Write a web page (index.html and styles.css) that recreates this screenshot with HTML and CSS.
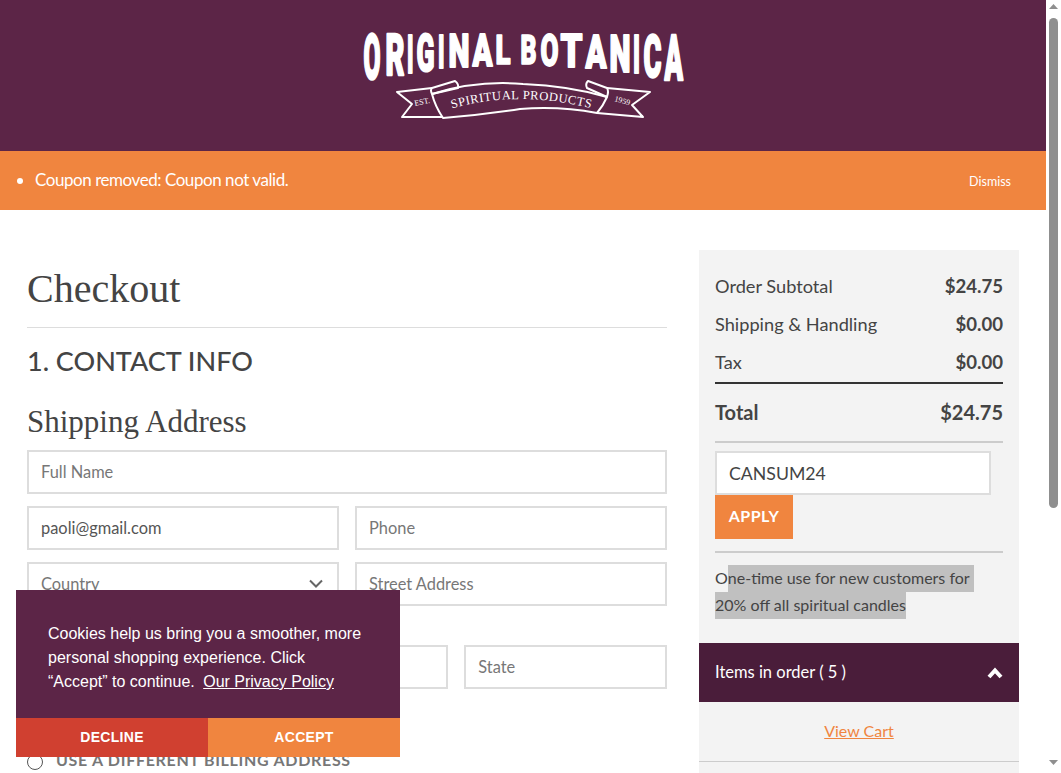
FILE: index.html
```html
<!DOCTYPE html>
<html lang="en">
<head>
<meta charset="utf-8">
<title>Checkout - Original Botanica</title>
<link rel="stylesheet" href="styles.css">
</head>
<body>
<div class="page">
  <div class="content">
    <header class="site-header">
      <svg class="logo" viewBox="360 30 326 97" width="326" height="97" role="img" aria-label="Original Botanica Spiritual Products">
        <g class="logo-word">
          <text transform="translate(363.5 78.5) scale(1 2.50)" textLength="17" lengthAdjust="spacingAndGlyphs">O</text>
          <text transform="translate(385.5 74.5) scale(1 2.28)" textLength="19" lengthAdjust="spacingAndGlyphs">R</text>
          <text transform="translate(407 72.5) scale(1 2.16)" textLength="6.5" lengthAdjust="spacingAndGlyphs">I</text>
          <text transform="translate(416.5 70.5) scale(1 2.05)" textLength="18" lengthAdjust="spacingAndGlyphs">G</text>
          <text transform="translate(438 67.5) scale(1 1.88)" textLength="6.5" lengthAdjust="spacingAndGlyphs">I</text>
          <text transform="translate(448.5 66.5) scale(1 1.82)" textLength="21" lengthAdjust="spacingAndGlyphs">N</text>
          <text transform="translate(472.5 65.5) scale(1 1.77)" textLength="20" lengthAdjust="spacingAndGlyphs">A</text>
          <text transform="translate(495.5 63.5) scale(1 1.66)" textLength="15" lengthAdjust="spacingAndGlyphs">L</text>
          <text transform="translate(520.5 63.5) scale(1 1.66)" textLength="16" lengthAdjust="spacingAndGlyphs">B</text>
          <text transform="translate(540.5 65.5) scale(1 1.77)" textLength="18" lengthAdjust="spacingAndGlyphs">O</text>
          <text transform="translate(560.5 66.5) scale(1 1.82)" textLength="22" lengthAdjust="spacingAndGlyphs">T</text>
          <text transform="translate(585.5 67.5) scale(1 1.88)" textLength="21" lengthAdjust="spacingAndGlyphs">A</text>
          <text transform="translate(609.5 71.5) scale(1 2.10)" textLength="21" lengthAdjust="spacingAndGlyphs">N</text>
          <text transform="translate(633 72.5) scale(1 2.16)" textLength="7" lengthAdjust="spacingAndGlyphs">I</text>
          <text transform="translate(643.5 76.5) scale(1 2.39)" textLength="18" lengthAdjust="spacingAndGlyphs">C</text>
          <text transform="translate(664.5 79.5) scale(1 2.55)" textLength="18.5" lengthAdjust="spacingAndGlyphs">A</text>
        </g>
        <g class="ribbon">
          <path d="M432 94 Q477 80 523 84 Q570 86 607 97 Q603 106 597 113 Q560 106 520 109 Q480 115 443 118 Q435 106 432 94Z"/>
          <path d="M432 94 Q430 90 432 88 L455 81 Q459 84 458 88 L432 94"/>
          <path d="M432 88 L397 92 L412 104 L402 117 L442 117"/>
          <path d="M607 97 Q609 91 607 88 L588 81 Q585 84 587 88 L607 97"/>
          <path d="M607 88 L650 92 L632 105 L643 117 L597 113"/>
        </g>
        <path id="ribbon-arc" class="arc" d="M452 108.5 Q521 88 606 112"/>
        <text class="ribbon-text"><textPath href="#ribbon-arc">SPIRITUAL PRODUCTS</textPath></text>
        <text class="ribbon-small" transform="translate(415 106) rotate(-12)">EST.</text>
        <text class="ribbon-small" transform="translate(614 101) rotate(16)">1959</text>
      </svg>
    </header>

    <div class="notice">
      <ul class="notice-list"><li>Coupon removed: Coupon not valid.</li></ul>
      <a class="dismiss" href="#">Dismiss</a>
    </div>

    <main class="checkout">
      <section class="form-col">
        <h1 class="title">Checkout</h1>
        <h2 class="step">1. CONTACT INFO</h2>
        <h3 class="subtitle">Shipping Address</h3>
        <div class="row"><input class="field" placeholder="Full Name"></div>
        <div class="row">
          <input class="field" value="paoli@gmail.com">
          <input class="field" placeholder="Phone">
        </div>
        <div class="row">
          <div class="field select">
            <span>Country</span>
            <svg class="chevron" viewBox="0 0 14 9" width="14" height="9"><path d="M1 1.5 7 7.5 13 1.5"/></svg>
          </div>
          <input class="field" placeholder="Street Address">
        </div>
        <div class="row row-spaced">
          <input class="field" placeholder="City">
          <input class="field" placeholder="Zip">
          <input class="field" placeholder="State">
        </div>
        <label class="radio-row"><span class="radio"></span><span>USE A DIFFERENT BILLING ADDRESS</span></label>
      </section>

      <aside class="summary">
        <div class="summary-body">
          <div class="line"><span>Order Subtotal</span><b>$24.75</b></div>
          <div class="line"><span>Shipping &amp; Handling</span><b>$0.00</b></div>
          <div class="line"><span>Tax</span><b>$0.00</b></div>
          <div class="total"><span>Total</span><b>$24.75</b></div>
          <input class="coupon" value="CANSUM24">
          <button class="apply">APPLY</button>
          <p class="promo">O<mark class="sel sel-first">ne-time use for new customers for</mark><br><mark class="sel">20% off all spiritual candles</mark></p>
        </div>
        <div class="items-head">
          <span>Items in order ( 5 )</span>
          <svg viewBox="0 0 16 12" width="16" height="12"><path d="M2 10 8 3.5 14 10"/></svg>
        </div>
        <div class="view-cart"><a href="#">View Cart</a></div>
      </aside>
    </main>
  </div>

  <div class="scrollbar" aria-hidden="true">
    <svg viewBox="0 0 9 5" width="9" height="5"><path d="M0 5 4.5 0 9 5Z"/></svg>
    <div class="thumb"></div>
    <svg class="arrow-down" viewBox="0 0 9 5" width="9" height="5"><path d="M0 0 4.5 5 9 0Z"/></svg>
  </div>

  <div class="cookie">
    <p class="cookie-text">Cookies help us bring you a smoother, more personal shopping experience. Click “Accept” to continue. <a href="#">Our Privacy Policy</a></p>
    <div class="cookie-actions">
      <button class="cookie-btn decline">DECLINE</button>
      <button class="cookie-btn accept">ACCEPT</button>
    </div>
  </div>
</div>
</body>
</html>
```

FILE: styles.css
```css
* { box-sizing: border-box; }
html, body { margin: 0; height: 773px; overflow: hidden; background: #fff; }
body { font-family: Lato, "Open Sans", sans-serif; color: #444; }

.page { display: flex; height: 773px; position: relative; overflow: hidden; }
.content { width: 1046px; display: flex; flex-direction: column; }

/* scrollbar */
.scrollbar { width: 15px; display: flex; flex-direction: column; align-items: center; padding-top: 4px; background: #fff; }
.scrollbar svg { fill: #8f8f8f; flex: none; }
.thumb { width: 9px; height: 490px; margin-top: 9px; background: #8f8f8f; border-radius: 5px; }
.arrow-down { margin-top: auto; margin-bottom: 8px; }

/* header */
.site-header { height: 151px; flex: none; background: #5c2547; display: flex; justify-content: center; padding-top: 30px; }
.logo { display: block; }
.logo-word text { font-family: Roboto, sans-serif; font-weight: 900; font-size: 25px; fill: #fff; stroke: #fff; stroke-width: 1; stroke-linejoin: round; }
.ribbon path { fill: none; stroke: #fff; stroke-width: 2; stroke-linejoin: round; }
.arc { fill: none; }
.ribbon-text { font-family: "Liberation Serif", serif; font-size: 12.5px; letter-spacing: .5px; fill: #fff; }
.ribbon-small { font-family: "Liberation Serif", serif; font-size: 8px; fill: #fff; }

/* notice */
.notice { height: 59px; flex: none; background: #f0853f; color: #fff; display: flex; align-items: center; justify-content: space-between; padding: 0 35px 2px; }
.notice-list { margin: 0; padding: 0; font-size: 17px; letter-spacing: -.45px; list-style: disc; }
.dismiss { color: #fff; font-size: 12.5px; text-decoration: none; padding-top: 4px; }

/* layout */
.checkout { flex: 1; display: grid; grid-template-columns: 640px 320px; column-gap: 32px; padding: 40px 27px 0; min-height: 0; }
.form-col { min-width: 0; }

.title { margin: 16px 0 0; padding-bottom: 15px; border-bottom: 1px solid #ddd; font: 400 40px/46px "Liberation Serif", serif; color: #444; }
.step { margin: 16px 0 0; font-size: 27px; line-height: 34px; font-weight: 500; color: #444; }
.subtitle { margin: 26px 0 10px; font: 400 31px/36px "Liberation Serif", serif; color: #444; }

.row { display: flex; gap: 16px; margin-bottom: 12px; }
.row-spaced { margin-top: 39px; }
.field { flex: 1 1 0; min-width: 0; height: 44px; padding: 0 12px 1px; border: 2px solid #ddd; border-radius: 0; background: #fff; font: 400 16.4px Lato, sans-serif; color: #555; outline: none; }
.field::placeholder { color: #777; opacity: 1; }
.select { display: flex; align-items: center; justify-content: space-between; color: #777; }
.chevron { fill: none; stroke: #666; stroke-width: 2; margin-right: 2px; }

.radio-row { display: flex; align-items: center; gap: 13px; margin-top: 61px; font-size: 16px; font-weight: 700; letter-spacing: .7px; color: #777; }
.radio { width: 16px; height: 16px; border: 1.5px solid #555; border-radius: 50%; position: relative; top: 2px; flex: none; }

/* summary */
.summary { background: #f3f3f3; display: flex; flex-direction: column; }
.summary-body { padding: 17px 16px 0; }
.line { display: flex; justify-content: space-between; align-items: center; height: 38px; font-size: 18.2px; }
.line b, .total b { font-weight: 700; }
.line b { font-size: 18.6px; }
.total { display: flex; justify-content: space-between; align-items: center; height: 61px; margin-top: 1px; padding-bottom: 2px; border-top: 2px solid #333; border-bottom: 2px solid #ccc; font-size: 20px; font-weight: 700; }
.coupon { display: block; width: 276px; height: 44px; margin-top: 8px; padding: 0 12px; border: 2px solid #ddd; background: #fff; font: 400 17.7px Lato, sans-serif; color: #444; outline: none; }
.apply { display: block; width: 78px; height: 44px; border: 0; background: #f0853f; color: #fff; font: 700 16px Lato, sans-serif; letter-spacing: .5px; padding: 0 0 4px; }
.promo { margin: 12px 0 0; padding-top: 12px; border-top: 2px solid #ccc; font-size: 16px; line-height: 25px; }
.sel { display: inline-block; vertical-align: top; background: #c0c0c0; color: #444; line-height: 25px; padding-bottom: 2px; }
.sel-first { padding-right: 4px; }
.items-head { margin-top: 24px; height: 59px; flex: none; background: #4a1d3a; color: #fff; display: flex; align-items: center; justify-content: space-between; padding: 0 16px; font-size: 16.5px; }
.items-head span { padding-bottom: 2px; }
.items-head svg { fill: none; stroke: #fff; stroke-width: 4; }
.view-cart { height: 60px; flex: none; border-bottom: 1px solid #ccc; display: flex; align-items: center; justify-content: center; padding-bottom: 2px; font-size: 16px; }
.view-cart a { color: #f0853f; }

/* cookie banner */
.cookie { position: absolute; left: 16px; bottom: 16px; width: 384px; background: #5c2547; color: #fff; font-family: "Liberation Sans", Arial, sans-serif; }
.cookie-text { margin: 0; padding: 32px 32px 25px; font-size: 16px; line-height: 24px; height: 128px; }
.cookie-text a { color: #fff; margin-left: 4px; }
.cookie-actions { display: flex; height: 39px; }
.cookie-btn { flex: 1; border: 0; padding: 0 0 2px; color: #fff; font: 700 14px "Liberation Sans", Arial, sans-serif; letter-spacing: .3px; }
.decline { background: #d04030; }
.accept { background: #f0853f; }
```
